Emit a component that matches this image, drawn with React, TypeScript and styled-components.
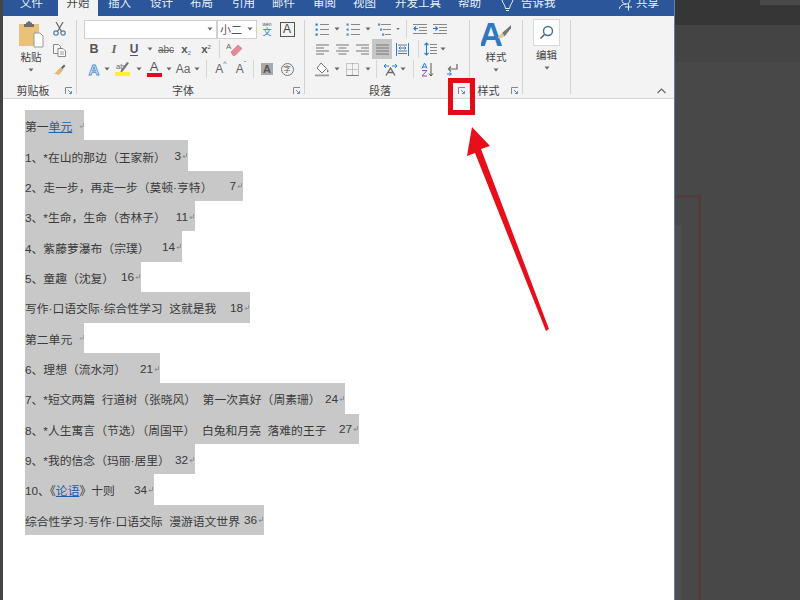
import React from "react";
import styled, { createGlobalStyle } from "styled-components";

const Global = createGlobalStyle`
  html, body { margin: 0; padding: 0; height: 100%; background: #474747; overflow: hidden; }
  #root { height: 100%; }
  * { box-sizing: border-box; }
`;
const FONT = `"Noto Sans CJK SC", "Noto Sans", sans-serif`;

const Page = styled.div`position: relative; display: flex; width: 800px; height: 600px; overflow: hidden; font-family: ${FONT};`;
const LeftStrip = styled.div`width: 3px; background: #444;`;
const Word = styled.div`width: 672px; height: 600px; display: flex; flex-direction: column; background: #fff; border-right: 1px solid #5f7ea8;`;
const TabBar = styled.div`height: 16px; flex: none; background: #2b579a; display: flex; align-items: flex-end; padding: 0 17px 7px 17px; overflow: hidden; color: #e9eef6; font-size: 11.5px; line-height: 14px;`;
const Tab = styled.span<{ $w: number; $active?: boolean }>`
  flex: none; width: ${p => p.$w}px; height: 16px; line-height: 14px; white-space: nowrap; display: flex; align-items: flex-end;
  ${p => p.$active ? "background:#f3f3f3;color:#444;margin-bottom:-7px;height:23px;justify-content:center;padding-bottom:7px;" : ""}
`;
const TabIcon = styled.svg<{ $mr: number }>`flex: none; align-self: flex-start; width: 14px; height: 16px; margin-right: ${p => p.$mr}px;`;
const Ribbon = styled.div`height: 83px; flex: none; background: #f3f3f3; border-bottom: 1px solid #d4d4d4; display: flex; color: #444; font-size: 10.5px;`;
const Group = styled.div<{ $w: number }>`width: ${p => p.$w}px; flex: none; display: flex; flex-direction: column;`;
const Rest = styled.div`flex: 1; display: flex; align-items: flex-end; justify-content: flex-end; padding: 0 8px 4px 0;`;
const Divider = styled.div`width: 1px; flex: none; margin: 4px 0 4px; background: #d2d2d2;`;
const Body = styled.div<{ $pl?: number; $row?: boolean; $center?: boolean }>`
  flex: 1; display: flex; flex-direction: ${p => p.$row ? "row" : "column"}; padding: 3px 0 0 ${p => p.$pl ?? 0}px;
  ${p => p.$center ? "align-items:center;" : ""}
`;
const Footer = styled.div<{ $shift?: number }>`height: 16px; flex: none; display: flex; align-items: center; justify-content: center; position: relative; font-size: 11px; color: #444; padding-right: ${p => p.$shift ?? 0}px;`;
const Launcher = styled.svg`position: absolute; right: 3px; bottom: 3px; width: 8px; height: 8px;`;
const IconRow = styled.div`height: 20px; display: flex; align-items: center;`;
const Cell = styled.div<{ $w: number; $on?: boolean }>`
  width: ${p => p.$w}px; height: 20px; flex: none; display: flex; align-items: center; justify-content: center; color: #555;
  ${p => p.$on ? "background:#c6c6c6;" : ""}
`;
const Sep = styled.div<{ $l: number; $r: number }>`width: 1px; height: 18px; flex: none; background: #d6d6d6; margin: 0 ${p => p.$r}px 0 ${p => p.$l}px;`;
const FontBox = styled.div<{ $w: number }>`width: ${p => p.$w}px; height: 19px; flex: none; background: #fff; border: 1px solid #d0d0d0; display: flex; align-items: center; justify-content: space-between; padding: 0 3px 0 2px; font-size: 11px; color: #555;`;
const Bold = styled.span`font: 700 12.5px "Liberation Sans", sans-serif; color: #555;`;
const Italic = styled.span`font: italic 700 13px "Liberation Serif", serif; color: #666;`;
const Under = styled.span`font: 700 12px "Liberation Sans", sans-serif; color: #555; border-bottom: 1px solid #555; line-height: 12px;`;
const Strike = styled.span`font: 10px "Liberation Sans", sans-serif; color: #666; text-decoration: line-through;`;
const Scr = styled.span`font: 700 11.5px "Liberation Sans", sans-serif; color: #555;`;
const Sub = styled.sub`font-size: 6px; font-weight: 400; color: #2b7cd3; vertical-align: -2px;`;
const Sup = styled.sup`font-size: 6px; font-weight: 400; vertical-align: 4px;`;
const Letter = styled.span<{ $c?: string; $s?: number }>`font: ${p => p.$s ?? 12}px "Liberation Sans", sans-serif; color: ${p => p.$c ?? "#666"}; line-height: 12px;`;
const StackLetter = styled.span<{ $bar: string }>`display: flex; flex-direction: column; align-items: center; font: 13px "Liberation Sans", sans-serif; line-height: 12px; color: #555; &::after { content: ""; width: 15px; height: 4px; background: ${p => p.$bar}; }`;
const BoxA = styled.span`display: flex; align-items: center; justify-content: center; width: 15px; height: 15px; border: 1px solid #555; font: 12px "Liberation Sans", sans-serif; color: #444;`;
const ShadeA = styled.span`display: flex; align-items: center; justify-content: center; width: 12px; height: 12px; background: #aaa; font: 700 11px "Liberation Sans", sans-serif; color: #555;`;
const CircleZi = styled.span`display: flex; align-items: center; justify-content: center; width: 13px; height: 13px; border: 1px solid #777; border-radius: 50%; font-size: 7.5px; color: #555; line-height: 1;`;
const Ruby = styled.span`display: flex; flex-direction: column; align-items: center; color: #2b7cd3; font-size: 9px; line-height: 10px; & > small { font: 5px "Liberation Sans", sans-serif; color: #555; line-height: 6px; }`;
const Bigger = styled.span`display: flex; align-items: flex-start; font: 12px "Liberation Sans", sans-serif; color: #666; & > i { font: 7px "Liberation Sans", sans-serif; margin-top: -2px; }`;
const Big = styled.div`display: flex; flex-direction: column; align-items: center; font-size: 10.5px; color: #444;`;
const BigLabel = styled.span`line-height: 14px; margin-top: 2px;`;
const CaretSlot = styled.div<{ $mt: number }>`display: flex; margin-top: ${p => p.$mt}px;`;
const PasteCol = styled.div`width: 32px; flex: none; display: flex; flex-direction: column; align-items: center; padding-top: 1px; font-size: 10.5px;`;
const ToolCol = styled.div`width: 24px; flex: none; display: flex; flex-direction: column; align-items: center; gap: 7.5px; padding-top: 3px;`;
const EditBox = styled.div`width: 27px; height: 27px; background: #fff; border: 1px solid #d8d8d8; display: flex; align-items: center; justify-content: center;`;
const Doc = styled.div`flex: 1; padding: 11px 0 0 22px; background: #fff; color: #3a3a3a; font: 11.8px "Liberation Sans", "Noto Sans CJK SC", sans-serif;`;
const Line = styled.div<{ $w: number; $hasNum: boolean }>`
  width: ${p => p.$w}px; height: 30.36px; background: #c8c8c8; display: flex; align-items: center; padding-top: 1px; white-space: pre;
  justify-content: ${p => p.$hasNum ? "space-between" : "flex-start"};
`;
const Link = styled.span`color: #1f5fa8; text-decoration: underline;`;
const End = styled.span`display: inline-flex; align-items: center; gap: 1px; padding-right: 1px;`;
const Backdrop = styled.div`flex: 1; display: flex; flex-direction: column; background: #484848;`;
const BackTop = styled.div`height: 25px; flex: none; background: #363636; display: flex; justify-content: flex-end; align-items: flex-start;`;
const BackPatch = styled.div`width: 40px; height: 5px; background: #494949;`;
const BackBand = styled.div`height: 37px; flex: none; background: #444;`;
const Frame = styled.div`width: 26px; flex: 1; margin-top: 133px; padding-top: 27px; display: flex; border-top: 3px solid #4f3c3c; border-right: 3px solid #4f3c3c;`;
const FrameInner = styled.div`width: 7px; background: #4e4e4e;`;
const RedBox = styled.div`position: absolute; left: 448px; top: 78px; width: 27px; height: 37px; border: 5px solid #e30b14;`;
const Arrow = styled.svg`position: absolute; left: 0; top: 0; width: 800px; height: 600px; pointer-events: none;`;

const Caret = ({ c = "#666" }: { c?: string }) => <svg width="6" height="4" viewBox="0 0 6 4"><path d="M0.5 0.5h5L3 3.500z" fill={c} /></svg>;
const Launch = () => <Launcher viewBox="0 0 8 8"><path d="M0.500 7V.5H7" fill="none" stroke="#888" /><path d="M3 3l3.500 3.500M6.500 4v2.500H4" fill="none" stroke="#6b8fb8" /></Launcher>;
const Ret = ({ c = "#888" }: { c?: string }) => <svg width="5" height="6" viewBox="0 0 5 6"><path d="M4.500 0v3.500H1M2.500 2L1 3.500 2.500 5" fill="none" stroke={c} strokeWidth=".8" /></svg>;

const Lines = ({ kind }: { kind: "l" | "c" | "r" | "j" }) => {
  const ys = [1, 4, 7, 10];
  const wide = (i: number) => kind === "j" || i % 2 === 0;
  return (
    <svg width="13" height="11" viewBox="0 0 13 11">
      {ys.map((y, i) => {
        const w = wide(i) ? 13 : 8;
        const x = kind === "l" || kind === "j" ? 0 : kind === "c" ? (13 - w) / 2 : 13 - w;
        return <rect key={y} x={x} y={y - 0.5} width={w} height="1" fill="#777" />;
      })}
    </svg>
  );
};
const ListIcon = ({ mark }: { mark: "b" | "n" | "m" }) => (
  <svg width="14" height="13" viewBox="0 0 14 13">
    {[1.5, 6.5, 11.5].map((y, i) => (
      <g key={y}>
        <rect x={mark === "m" ? 1 + i * 2 : 0.5} y={y - 1} width="2.200" height="2.200" fill={mark === "b" ? "#2b7cd3" : "#5a8fc8"} />
        <rect x={mark === "m" ? 4 + i * 2 : 5} y={y - 0.5} width={mark === "m" ? 10 - i * 2 : 9} height="1" fill="#888" />
      </g>
    ))}
  </svg>
);
const Indent = ({ inc }: { inc?: boolean }) => (
  <svg width="14" height="12" viewBox="0 0 14 12">
    {[1, 4, 7, 10].map(y => <rect key={y} x={y === 1 || y === 10 ? 0 : 6} y={y} width={y === 1 || y === 10 ? 14 : 8} height="1" fill="#888" />)}
    <path d={inc ? "M0 5.500h4M2.500 3.500l2 2-2 2" : "M5 5.500H1M3 3.500l-2 2 2 2"} fill="none" stroke="#2b7cd3" strokeWidth="1.200" />
  </svg>
);
const Distributed = () => (
  <svg width="13" height="13" viewBox="0 0 13 13">
    <path d="M.5 0v13M12.500 0v13" stroke="#2b7cd3" fill="none" />
    <path d="M2 2h9M2 10.500h9M2 8h9" stroke="#777" fill="none" />
    <path d="M3 5h7M3 5l1.500-1.500M3 5l1.500 1.500M10 5L8.500 3.500M10 5L8.500 6.500" stroke="#2b7cd3" fill="none" />
  </svg>
);
const Spacing = () => (
  <svg width="13" height="14" viewBox="0 0 13 14">
    <path d="M2.500 1v12M.5 3l2-2 2 2M.5 11l2 2 2-2" stroke="#2b7cd3" fill="none" strokeWidth="1.100" />
    <path d="M6 2.500h7M6 5.500h7M6 8.500h7M6 11.500h7" stroke="#888" fill="none" />
  </svg>
);
const Bucket = () => (
  <svg width="15" height="15" viewBox="0 0 15 15">
    <path d="M6 1l5.500 5.500L7 11 2 6z" fill="#fff" stroke="#777" />
    <path d="M12.500 7c1 1.500 1.500 2.500.5 3.200-1 .5-1.500-.7-.5-3.200z" fill="#777" />
    <rect x="0" y="12.500" width="14" height="1.800" fill="#9c9c9c" />
  </svg>
);
const Borders = () => (
  <svg width="13" height="13" viewBox="0 0 13 13">
    <path d="M.5.5h12v12H.5zM6.500.5v12M.5 6.500h12" fill="none" stroke="#999" strokeDasharray="1 1" />
    <path d="M.5 12.500h12" stroke="#777" />
  </svg>
);
const Chinese = () => (
  <svg width="15" height="14" viewBox="0 0 15 14">
    <path d="M1 4h5M1 4l2-2M1 4l2 2M14 4H9M14 4l-2-2M14 4l-2 2" fill="none" stroke="#2b7cd3" />
    <path d="M3 13.500L7.500 6l4.500 7.500M5 10.500h5" fill="none" stroke="#666" strokeWidth="1.300" />
  </svg>
);
const Sort = () => (
  <svg width="13" height="15" viewBox="0 0 13 15">
    <path d="M1 6.500L3.500 1 6 6.500M1.800 5h3.400" fill="none" stroke="#2b7cd3" />
    <path d="M1 8.500h5L1 14h5" fill="none" stroke="#a04bb0" />
    <path d="M10 1v13M8 11.500l2 2.500 2-2.500" fill="none" stroke="#555" />
  </svg>
);
const ShowMarks = () => (
  <svg width="13" height="13" viewBox="0 0 13 13">
    <path d="M11 1v5H3" fill="none" stroke="#666" strokeWidth="1.200" />
    <path d="M5 3.500L2.500 6 5 8.500" fill="none" stroke="#666" strokeWidth="1.200" />
    <path d="M1 11h4M3.500 9.500l2 1.500-2 1.500" fill="none" stroke="#2b7cd3" />
  </svg>
);
const Eraser = () => (
  <svg width="17" height="15" viewBox="0 0 17 15">
    <text x="0" y="7" fontSize="8" fill="#666" fontFamily="Liberation Sans">A</text>
    <path d="M5 10l7-7 4 3.500-7 7H7z" fill="#e98a98" stroke="#d06a7a" strokeWidth=".6" />
  </svg>
);
const Highlighter = () => (
  <svg width="16" height="14" viewBox="0 0 16 14">
    <text x="1" y="7" fontSize="7.500" fill="#666" fontFamily="Liberation Sans">ab</text>
    <path d="M14 1L8 9l-3 3 1-4 6-8z" fill="#777" />
    <rect x="0" y="10" width="15" height="4" fill="#ffef2e" />
  </svg>
);
const TextEffect = () => (
  <span style={{ font: "700 15px 'Liberation Sans', sans-serif", color: "#dcebfb", WebkitTextStroke: "0.8px #4f8fd0" }}>A</span>
);
const Paste = () => (
  <svg width="26" height="28" viewBox="0 0 26 28">
    <rect x="1" y="4" width="20" height="22" fill="#e9c178" />
    <path d="M8 2.500h1.500a1.500 1.500 0 013 0H14v1.500h2v3H6V4h2z" fill="#6e6e6e" />
    <path d="M16 13h6l3 3v11h-9z" fill="#fff" stroke="#9a9a9a" />
  </svg>
);
const Scissors = () => (
  <svg width="13" height="14" viewBox="0 0 13 14">
    <circle cx="3" cy="11" r="2.200" fill="none" stroke="#4f7ea8" strokeWidth="1.200" />
    <circle cx="10" cy="11" r="2.200" fill="none" stroke="#4f7ea8" strokeWidth="1.200" />
    <path d="M4.500 9.500L10 0M8.500 9.500L3 0" stroke="#666" fill="none" strokeWidth="1.200" />
  </svg>
);
const Copy = () => (
  <svg width="13" height="13" viewBox="0 0 13 13">
    <path d="M.5.5h5l2 2v7h-7z" fill="#f5f5f5" stroke="#888" />
    <path d="M5 4.500h5l2.500 2.500v5.500H5z" fill="#fff" stroke="#888" />
    <path d="M7 8h4M7 10h4" stroke="#999" />
  </svg>
);
const Brush = () => (
  <svg width="13" height="12" viewBox="0 0 13 12">
    <path d="M8 3l2.500 2.500L6 11 .5 9.500c2 0 3-1.500 4-3z" fill="#e3b877" />
    <path d="M8 3.500L11 .5l1.500 1.500-3 3z" fill="#666" />
  </svg>
);
const Styles = () => (
  <svg width="30" height="29" viewBox="0 0 30 29">
    <text x="-2" y="27" fontSize="33" fontWeight="700" fill="#2f78c4" fontFamily="Liberation Sans">A</text>
    <path d="M30 6L21 14l2.500 3.500L31 8z" fill="#777" />
    <path d="M21 14c-2 1-3 3-4.500 5 3 .5 5.500-.5 7-2z" fill="#e6c48e" />
  </svg>
);
const Search = () => (
  <svg width="15" height="15" viewBox="0 0 15 15">
    <circle cx="9" cy="6" r="4.500" fill="none" stroke="#3f6f9f" strokeWidth="1.400" />
    <path d="M5.500 9.500L1.500 13.500" stroke="#555" strokeWidth="1.500" />
  </svg>
);

const rows: { t: React.ReactNode; n?: string; w: number }[] = [
  { t: <>第一<Link>单元</Link>  </>, w: 59 },
  { t: "1、*在山的那边（王家新）", n: "3", w: 163 },
  { t: "2、走一步，再走一步（莫顿·亨特）", n: "7", w: 218 },
  { t: "3、*生命，生命（杏林子）", n: "11", w: 170 },
  { t: "4、紫藤萝瀑布（宗璞）", n: "14", w: 157 },
  { t: "5、童趣（沈复）", n: "16", w: 116 },
  { t: "写作·口语交际·综合性学习  这就是我", n: "18", w: 225 },
  { t: "第二单元  ", w: 59 },
  { t: "6、理想（流水河）", n: "21", w: 135 },
  { t: "7、*短文两篇  行道树（张晓风）  第一次真好（周素珊）", n: "24", w: 320 },
  { t: "8、*人生寓言（节选）（周国平）  白兔和月亮  落难的王子", n: "27", w: 334 },
  { t: "9、*我的信念（玛丽·居里）", n: "32", w: 170 },
  { t: <>10、《<Link>论语</Link>》十则</>, n: "34", w: 129 },
  { t: "综合性学习·写作·口语交际  漫游语文世界", n: "36", w: 239 },
];

export default function App() {
  return (
    <Page>
      <Global />
      <LeftStrip />
      <Word>
        <TabBar>
          <Tab $w={38}>文件</Tab>
          <Tab $w={40} $active>开始</Tab>
          <Tab $w={10} />
          <Tab $w={42}>插入</Tab>
          <Tab $w={40}>设计</Tab>
          <Tab $w={42}>布局</Tab>
          <Tab $w={40}>引用</Tab>
          <Tab $w={41}>邮件</Tab>
          <Tab $w={40}>审阅</Tab>
          <Tab $w={42}>视图</Tab>
          <Tab $w={63}>开发工具</Tab>
          <Tab $w={42}>帮助</Tab>
          <TabIcon $mr={7} viewBox="0 0 14 16"><path d="M2 0C3 3.500 5 5 5.500 8.500h4C10 5 12 3.500 13 0M6 10.500h3" fill="none" stroke="#e9eef6" /></TabIcon>
          <Tab $w={98}>告诉我</Tab>
          <TabIcon $mr={3} viewBox="0 0 14 16"><path d="M3 0c0 2.500 1.800 4 4 4s4-1.500 4-4M0 9c.8-3 3.500-5 7-5M9.500 3.500v7M6 7h7" fill="none" stroke="#e9eef6" /></TabIcon>
          <Tab $w={30}>共享</Tab>
        </TabBar>
        <Ribbon>
          <Group $w={73}>
            <Body $row $pl={12}>
              <PasteCol>
                <Paste />
                <BigLabel>粘贴</BigLabel>
                <CaretSlot $mt={4}><Caret /></CaretSlot>
              </PasteCol>
              <ToolCol>
                <Scissors />
                <Copy />
                <Brush />
              </ToolCol>
            </Body>
            <Footer $shift={13}>剪贴板<Launch /></Footer>
          </Group>
          <Divider />
          <Group $w={227}>
            <Body $pl={7}>
              <IconRow>
                <FontBox $w={133}><span /><Caret /></FontBox>
                <FontBox $w={40}>小二<Caret /></FontBox>
                <Cell $w={20}><Ruby><small>wén</small>文</Ruby></Cell>
                <Cell $w={20}><BoxA>A</BoxA></Cell>
              </IconRow>
              <IconRow>
                <Cell $w={20}><Bold>B</Bold></Cell>
                <Cell $w={20}><Italic>I</Italic></Cell>
                <Cell $w={20}><Under>U</Under></Cell>
                <Cell $w={12}><Caret /></Cell>
                <Cell $w={20}><Strike>abc</Strike></Cell>
                <Cell $w={20}><Scr>x<Sub>2</Sub></Scr></Cell>
                <Cell $w={20}><Scr>x<Sup>2</Sup></Scr></Cell>
                <Sep $l={3} $r={3} />
                <Cell $w={22}><Eraser /></Cell>
              </IconRow>
              <IconRow>
                <Cell $w={20}><TextEffect /></Cell>
                <Cell $w={6}><Caret /></Cell>
                <Cell $w={26}><Highlighter /></Cell>
                <Cell $w={6}><Caret /></Cell>
                <Cell $w={24}><StackLetter $bar="#d9101a">A</StackLetter></Cell>
                <Cell $w={6}><Caret /></Cell>
                <Cell $w={22}><Letter>Aa</Letter></Cell>
                <Cell $w={6}><Caret /></Cell>
                <Sep $l={6} $r={4} />
                <Cell $w={20}><Bigger>A<i>^</i></Bigger></Cell>
                <Cell $w={20}><Bigger>A<i>ˇ</i></Bigger></Cell>
                <Sep $l={2} $r={3} />
                <Cell $w={20}><ShadeA>A</ShadeA></Cell>
                <Cell $w={20}><CircleZi>字</CircleZi></Cell>
              </IconRow>
            </Body>
            <Footer $shift={15}>字体<Launch /></Footer>
          </Group>
          <Divider />
          <Group $w={164}>
            <Body $pl={7}>
              <IconRow>
                <Cell $w={20}><ListIcon mark="b" /></Cell>
                <Cell $w={10}><Caret /></Cell>
                <Cell $w={22}><ListIcon mark="n" /></Cell>
                <Cell $w={8}><Caret /></Cell>
                <Cell $w={24}><ListIcon mark="m" /></Cell>
                <Cell $w={4}><Caret /></Cell>
                <Sep $l={6} $r={3} />
                <Cell $w={20}><Indent /></Cell>
                <Cell $w={20}><Indent inc /></Cell>
              </IconRow>
              <IconRow>
                <Cell $w={20}><Lines kind="l" /></Cell>
                <Cell $w={20}><Lines kind="c" /></Cell>
                <Cell $w={20}><Lines kind="r" /></Cell>
                <Cell $w={20} $on><Lines kind="j" /></Cell>
                <Cell $w={20}><Distributed /></Cell>
                <Sep $l={6} $r={1} />
                <Cell $w={20}><Spacing /></Cell>
                <Cell $w={6}><Caret /></Cell>
              </IconRow>
              <IconRow>
                <Cell $w={20}><Bucket /></Cell>
                <Cell $w={10}><Caret /></Cell>
                <Cell $w={20}><Borders /></Cell>
                <Cell $w={12}><Caret /></Cell>
                <Sep $l={2} $r={3} />
                <Cell $w={20}><Chinese /></Cell>
                <Cell $w={6}><Caret /></Cell>
                <Sep $l={7} $r={0} />
                <Cell $w={26}><Sort /></Cell>
                <Cell $w={24}><ShowMarks /></Cell>
              </IconRow>
            </Body>
            <Footer $shift={14}>段落<Launch /></Footer>
          </Group>
          <Divider />
          <Group $w={52}>
            <Body $center>
              <Big>
                <Styles />
                <BigLabel>样式</BigLabel>
                <CaretSlot $mt={4}><Caret /></CaretSlot>
              </Big>
            </Body>
            <Footer $shift={15}>样式<Launch /></Footer>
          </Group>
          <Divider />
          <Group $w={47}>
            <Body $center>
              <Big>
                <EditBox><Search /></EditBox>
                <BigLabel>编辑</BigLabel>
                <CaretSlot $mt={4}><Caret /></CaretSlot>
              </Big>
            </Body>
          </Group>
          <Divider />
          <Rest>
            <svg width="9" height="6" viewBox="0 0 9 6"><path d="M.5 5L4.500 1l4 4" fill="none" stroke="#666" strokeWidth="1.200" /></svg>
          </Rest>
        </Ribbon>
        <Doc>
          {rows.map((r, i) => (
            <Line key={i} $w={r.w} $hasNum={!!r.n}>
              <span>{r.t}</span>
              {r.n ? <End>{r.n}<Ret /></End> : <Ret c="#999" />}
            </Line>
          ))}
        </Doc>
      </Word>
      <Backdrop>
        <BackTop><BackPatch /></BackTop>
        <BackBand />
        <Frame><FrameInner /></Frame>
      </Backdrop>
      <RedBox />
      <Arrow viewBox="0 0 800 600">
        <path d="M472 127L490 146 481 149 549 329 546 331 475 153 467 156z" fill="#e60f1a" />
      </Arrow>
    </Page>
  );
}
